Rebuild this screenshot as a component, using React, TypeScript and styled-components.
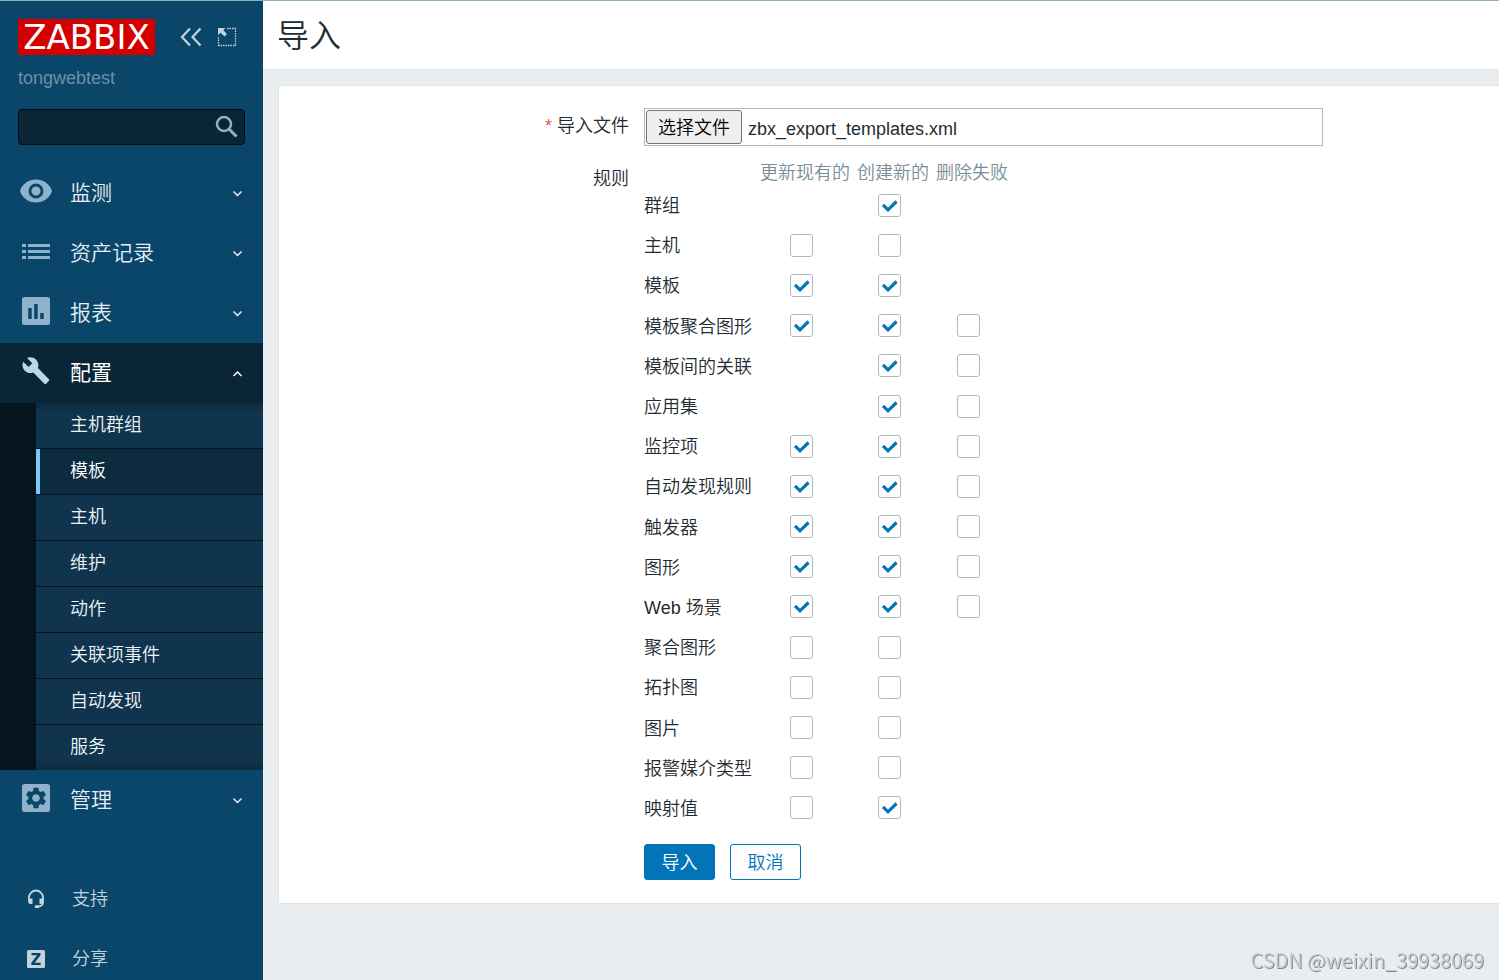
import React, { useRef, useState } from "react";
import styled, { createGlobalStyle } from "styled-components";

const GlobalStyle = createGlobalStyle`
  *, *::before, *::after { box-sizing: border-box; }
  body {
    margin: 0;
    background: #e9edf0;
    color: #1f2c33;
    font-family: "Liberation Sans", "Noto Sans CJK SC", sans-serif;
    font-size: 18px;
    font-weight: 350;
    line-height: 24px;
  }
  button, input { font: inherit; }
`;

const Page = styled.div`
  display: flex;
  height: 100vh;
  border-top: 1px solid #8fb0b5;
`;

const Sidebar = styled.aside`
  flex: none;
  width: 263px;
  display: flex;
  flex-direction: column;
  background: #0a466a;
  overflow-y: auto;
  scrollbar-width: none;
`;

const Brand = styled.div`
  display: flex;
  flex: none;
  align-items: center;
  padding: 18px 18px 0;
`;

const Logo = styled.a`
  width: 137px;
  height: 36px;
  margin-right: 25px;
  background: #d40000;
  color: #fff;
  font-family: "DejaVu Sans", sans-serif;
  font-size: 34px;
  font-weight: 400;
  line-height: 37px;
  text-align: center;
  text-decoration: none;
`;

const IconButton = styled.button`
  display: flex;
  padding: 0;
  border: 0;
  background: none;
  color: #c3d3dd;
  cursor: pointer;
  & + & { margin-left: 15px; }
`;

const ServerName = styled.div`
  flex: none;
  padding: 11px 18px 0;
  color: #6c90a8;
`;

const SearchForm = styled.form`
  display: flex;
  flex: none;
  align-items: center;
  height: 36px;
  margin: 19px 18px 18px;
  padding-right: 6px;
  background: #0a2535;
  border: 1px solid #020c12;
  border-radius: 4px;
`;

const SearchInput = styled.input`
  flex: 1;
  min-width: 0;
  padding: 0 10px;
  border: 0;
  outline: 0;
  background: transparent;
  color: #fff;
`;

const SearchButton = styled(IconButton)`
  color: #8fb0c6;
`;

const List = styled.ul`
  margin: 0;
  padding: 0;
  list-style: none;
`;

const MenuLink = styled.a<{ $open?: boolean }>`
  display: flex;
  align-items: center;
  height: 60px;
  padding: 0 20px;
  background: ${(p) => (p.$open ? "#0a2535" : "transparent")};
  color: ${(p) => (p.$open ? "#ffffff" : "#e6eef3")};
  font-size: 21px;
  font-weight: ${(p) => (p.$open ? 400 : 350)};
  text-decoration: none;
`;

const MenuIcon = styled.span<{ $open?: boolean }>`
  display: flex;
  width: 32px;
  margin-right: 18px;
  padding-bottom: 4px;
  color: ${(p) => (p.$open ? "#b9d7ec" : "#8fb3cc")};
`;

const MenuText = styled.span`
  flex: 1;
`;

const Submenu = styled(List)`
  padding-left: 36px;
  background: #04151e;
`;

const SubItem = styled.li`
  & + & { border-top: 1px solid #04151e; }
`;

const SubLink = styled.a<{ $active?: boolean }>`
  display: block;
  height: 45px;
  padding-left: 30px;
  border-left: 4px solid ${(p) => (p.$active ? "#78c7ff" : "transparent")};
  background: ${(p) => (p.$active ? "#0c2b3f" : "#10344e")};
  color: ${(p) => (p.$active ? "#ffffff" : "#eef3f6")};
  line-height: 45px;
  text-decoration: none;
  ${SubItem}:first-child & { background: linear-gradient(#0c2b3f, #10344e 10px) border-box; }
  ${SubItem}:last-child & { background: linear-gradient(#10344e 35px, #0c2b3f) border-box; }
`;

const FooterList = styled(List)`
  margin-top: 39px;
`;

const FooterLink = styled.a`
  display: flex;
  align-items: center;
  gap: 26px;
  height: 60px;
  padding-left: 26px;
  color: #c3d3dd;
  text-decoration: none;
`;

const Main = styled.main`
  flex: 1;
  min-width: 0;
  overflow: hidden;
`;

const Header = styled.header`
  height: 69px;
  padding: 0 14px;
  background: #fff;
  border-bottom: 1px solid #dfe4e7;
`;

const Title = styled.h1`
  margin: 0;
  font-size: 32px;
  font-weight: 350;
  line-height: 71px;
`;

const Panel = styled.form`
  display: grid;
  grid-template-columns: minmax(150px, 350px) minmax(0, 679px);
  column-gap: 15px;
  margin: 15px 0 0 15px;
  padding: 22px 0 23px;
  background: #fff;
  border: 1px solid #dfe4e7;
  border-right: 0;
`;

const FieldLabel = styled.label`
  padding-top: 6px;
  text-align: right;
`;

const RulesLabel = styled.div`
  padding-top: 21px;
  text-align: right;
`;

const Required = styled.span`
  margin-right: 5px;
  color: #e45959;
`;

const FileField = styled.div`
  display: flex;
  align-items: center;
  gap: 6px;
  height: 38px;
  padding: 1px;
  border: 1px solid #acbbc2;
`;

const FileInput = styled.input`
  display: none;
`;

const FileButton = styled.button`
  height: 34px;
  padding: 2px 11px 0;
  background: #efefef;
  border: 1px solid #767676;
  border-radius: 3px;
  color: #000;
`;

const FileName = styled.span`
  padding-top: 4px;
`;

const Rules = styled.div`
  padding-top: 15px;
`;

const RuleTable = styled.table`
  border-collapse: collapse;
  height: 667px;
`;

const ColumnHead = styled.th`
  height: 24px;
  padding: 0 0 0 7px;
  color: #768d99;
  font-weight: 350;
`;

const RuleName = styled.th`
  padding: 2px 1px 0 0;
  font-weight: 350;
  text-align: left;
`;

const RuleCell = styled.td`
  padding: 0;
  text-align: center;
`;

const CheckBox = styled.input`
  appearance: none;
  display: block;
  width: 23px;
  height: 23px;
  margin: 0 auto;
  background: #fff;
  border: 1px solid #acbbc2;
  border-radius: 3px;
  &:checked {
    background-image: url("data:image/svg+xml,%3Csvg xmlns='http://www.w3.org/2000/svg' viewBox='0 0 21 21'%3E%3Cpath d='M4 9.800l5 5L17.500 6.500' fill='none' stroke='%230275b8' stroke-width='3.200'/%3E%3C/svg%3E");
  }
`;

const Actions = styled.div`
  grid-column: 2;
  display: flex;
  gap: 15px;
  padding-top: 16px;
`;

const ActionButton = styled.button<{ $outline?: boolean }>`
  width: 71px;
  height: 36px;
  padding: 2px 0 0;
  background: ${(p) => (p.$outline ? "#fff" : "#0275b8")};
  border: 1px solid #0275b8;
  border-radius: 3px;
  color: ${(p) => (p.$outline ? "#0275b8" : "#fff")};
`;

const Watermark = styled.div`
  position: fixed;
  right: 15px;
  bottom: 7px;
  color: #c9cccf;
  font-family: "Noto Sans CJK SC", sans-serif;
  font-size: 20px;
  line-height: 26px;
  text-shadow: 1px 1px 0 #85888b;
`;

const EyeIcon = () => (
  <svg width="32" height="24" viewBox="0 0 32 24" fill="currentColor">
    <path
      fillRule="evenodd"
      d="M16 .5C8.500 .5 2.200 5.200 0 12c2.200 6.800 8.500 11.500 16 11.500S29.800 18.800 32 12C29.800 5.200 23.500 .5 16 .5zm0 19a7.500 7.500 0 1 1 0-15 7.500 7.500 0 0 1 0 15zm0-12a4.500 4.500 0 1 0 0 9 4.500 4.500 0 0 0 0-9z"
    />
  </svg>
);

const ListIcon = () => (
  <svg width="32" height="18" viewBox="0 0 32 18" fill="currentColor">
    <path d="M2 2h4v3H2zM8 2h22v3H8zM2 8h4v3H2zM8 8h22v3H8zM2 14h4v3H2zM8 14h22v3H8z" />
  </svg>
);

const ChartIcon = () => (
  <svg width="32" height="28" viewBox="0 0 32 28" fill="currentColor">
    <path
      fillRule="evenodd"
      d="M4.500 0h23A2.500 2.500 0 0 1 30 2.500v23a2.500 2.500 0 0 1-2.500 2.500h-23A2.500 2.500 0 0 1 2 25.500v-23A2.500 2.500 0 0 1 4.500 0zM8.200 11v11h3.500V11zm6-4v15h3.500V7zm6 9v6h3.500v-6z"
    />
  </svg>
);

const WrenchIcon = () => (
  <svg width="32" height="28" viewBox="0 0 32 28" fill="currentColor">
    <path
      transform="translate(1.300 -1) scale(1.220)"
      d="M22.700 19l-9.100-9.100c.9-2.300.4-5-1.500-6.900-2-2-5-2.400-7.400-1.300L9 6 6 9 1.600 4.700C.4 7.100.9 10.100 2.900 12.100c1.900 1.900 4.600 2.400 6.900 1.500l9.100 9.100c.4.4 1 .4 1.400 0l2.300-2.300c.5-.4.5-1.100.1-1.400z"
    />
  </svg>
);

const GearIcon = () => (
  <svg width="32" height="28" viewBox="0 0 32 28">
    <rect x="2" width="28" height="28" rx="2.500" fill="currentColor" />
    <path
      transform="translate(3.300 1.300) scale(1.060)"
      fill="#0a466a"
      d="M19.140 12.940c.04-.3.06-.61.06-.94 0-.32-.02-.64-.07-.94l2.030-1.580c.18-.14.23-.41.12-.61l-1.920-3.320c-.12-.22-.37-.29-.59-.22l-2.390.96c-.5-.38-1.030-.7-1.620-.94L14.400 2.810c-.04-.24-.24-.41-.48-.41h-3.840c-.24 0-.43.17-.47.41L9.250 5.350c-.59.24-1.130.57-1.620.94l-2.390-.96c-.22-.08-.47 0-.59.22L2.740 8.870c-.12.21-.08.47.12.61l2.030 1.580c-.05.3-.09.63-.09.94s.02.64.07.94l-2.030 1.580c-.18.14-.23.41-.12.61l1.920 3.320c.12.22.37.29.59.22l2.390-.96c.5.38 1.030.7 1.620.94l.36 2.540c.05.24.24.41.48.41h3.840c.24 0 .44-.17.47-.41l.36-2.540c.59-.24 1.130-.56 1.620-.94l2.390.96c.22.08.47 0 .59-.22l1.920-3.320c.12-.22.07-.47-.12-.61l-2.010-1.580zM12 15.600c-1.980 0-3.600-1.620-3.600-3.600s1.620-3.600 3.600-3.600 3.600 1.620 3.600 3.600-1.620 3.600-3.600 3.600z"
    />
  </svg>
);

const Chevron = ({ up }: { up?: boolean }) => (
  <svg width="12" height="12" viewBox="0 0 12 12" fill="none" stroke="currentColor" strokeWidth="1.500">
    <path d={up ? "M2.500 9L6.500 5l4 4" : "M2.500 4.500l4 4 4-4"} />
  </svg>
);

const CollapseIcon = () => (
  <svg width="22" height="20" viewBox="0 0 22 20" fill="none" stroke="currentColor" strokeWidth="2.200">
    <path d="M10 1.500L2 10l8 8.500M20.500 1.500l-8 8.500 8 8.500" />
  </svg>
);

const KioskIcon = () => (
  <svg width="20" height="20" viewBox="0 0 20 20" fill="none" stroke="currentColor">
    <path d="M10 1.500H19M18.500 1v18M1.500 10v9M1 18.500h18" strokeDasharray="1.500 1" strokeWidth="1.300" />
    <path d="M1 1h7.500L6.300 3.200 10 7 7.500 9.500 3.600 5.800 1 8.300z" fill="currentColor" stroke="none" />
  </svg>
);

const SearchIcon = () => (
  <svg width="24" height="24" viewBox="0 0 24 24" fill="none" stroke="currentColor">
    <circle cx="10" cy="9" r="7" strokeWidth="2.500" />
    <path d="M15 14l7.500 7.500" strokeWidth="3" />
  </svg>
);

const HeadsetIcon = () => (
  <svg width="20" height="20" viewBox="0 0 20 20">
    <path
      d="M3 12V8.500a7 7 0 0 1 14 0V13c0 3-2 4.500-5 4.500"
      fill="none"
      stroke="currentColor"
      strokeWidth="1.800"
    />
    <path
      d="M2.200 9.500H6.500v5.500H4.500a2.300 2.300 0 0 1-2.300-2.300zM13.500 9.500h4.300v3.200a2.300 2.300 0 0 1-2.300 2.300h-2zM10 16.300h3v2.700h-3a1.300 1.300 0 0 1 0-2.700z"
      fill="currentColor"
    />
  </svg>
);

const ShareIcon = () => (
  <svg width="20" height="20" viewBox="0 0 20 20">
    <rect x="1" y="1" width="18" height="18" rx="1.500" fill="currentColor" />
    <path d="M5.500 4h9v2.200L8.700 13.700h6V16H5.300v-2.200l5.800-7.500H5.500z" fill="#0a466a" />
  </svg>
);

const topMenu = [
  { text: "监测", Icon: EyeIcon },
  { text: "资产记录", Icon: ListIcon },
  { text: "报表", Icon: ChartIcon },
];

const configItems = ["主机群组", "模板", "主机", "维护", "动作", "关联项事件", "自动发现", "服务"];

const ruleColumns = ["更新现有的", "创建新的", "删除失败"];

/* One flag per column: true is ticked, false is clear, null has no box. */
const rules: { name: string; flags: (boolean | null)[] }[] = [
  { name: "群组", flags: [null, true, null] },
  { name: "主机", flags: [false, false, null] },
  { name: "模板", flags: [true, true, null] },
  { name: "模板聚合图形", flags: [true, true, false] },
  { name: "模板间的关联", flags: [null, true, false] },
  { name: "应用集", flags: [null, true, false] },
  { name: "监控项", flags: [true, true, false] },
  { name: "自动发现规则", flags: [true, true, false] },
  { name: "触发器", flags: [true, true, false] },
  { name: "图形", flags: [true, true, false] },
  { name: "Web 场景", flags: [true, true, false] },
  { name: "聚合图形", flags: [false, false, null] },
  { name: "拓扑图", flags: [false, false, null] },
  { name: "图片", flags: [false, false, null] },
  { name: "报警媒介类型", flags: [false, false, null] },
  { name: "映射值", flags: [false, true, null] },
];

function MenuEntry({ text, Icon, open }: { text: string; Icon: React.ComponentType; open?: boolean }) {
  return (
    <MenuLink href="#" $open={open}>
      <MenuIcon $open={open}>
        <Icon />
      </MenuIcon>
      <MenuText>{text}</MenuText>
      <Chevron up={open} />
    </MenuLink>
  );
}

export default function App() {
  const fileRef = useRef<HTMLInputElement>(null);
  const [fileName, setFileName] = useState("zbx_export_templates.xml");

  return (
    <>
      <GlobalStyle />
      <Page>
        <Sidebar>
          <Brand>
            <Logo href="#">ZABBIX</Logo>
            <IconButton type="button" aria-label="Collapse">
              <CollapseIcon />
            </IconButton>
            <IconButton type="button" aria-label="Kiosk">
              <KioskIcon />
            </IconButton>
          </Brand>
          <ServerName>tongwebtest</ServerName>
          <SearchForm role="search">
            <SearchInput type="text" aria-label="Search" />
            <SearchButton type="button" aria-label="Search">
              <SearchIcon />
            </SearchButton>
          </SearchForm>
          <nav>
            <List>
              {topMenu.map((m) => (
                <li key={m.text}>
                  <MenuEntry {...m} />
                </li>
              ))}
              <li>
                <MenuEntry text="配置" Icon={WrenchIcon} open />
                <Submenu>
                  {configItems.map((item) => (
                    <SubItem key={item}>
                      <SubLink href="#" $active={item === "模板"}>
                        {item}
                      </SubLink>
                    </SubItem>
                  ))}
                </Submenu>
              </li>
              <li>
                <MenuEntry text="管理" Icon={GearIcon} />
              </li>
            </List>
            <FooterList>
              <li>
                <FooterLink href="#">
                  <HeadsetIcon />
                  支持
                </FooterLink>
              </li>
              <li>
                <FooterLink href="#">
                  <ShareIcon />
                  分享
                </FooterLink>
              </li>
            </FooterList>
          </nav>
        </Sidebar>
        <Main>
          <Header>
            <Title>导入</Title>
          </Header>
          <Panel onSubmit={(e) => e.preventDefault()}>
            <FieldLabel htmlFor="import-file">
              <Required>*</Required>
              导入文件
            </FieldLabel>
            <FileField>
              <FileInput
                id="import-file"
                type="file"
                ref={fileRef}
                onChange={(e) => setFileName(e.target.files?.[0]?.name ?? "")}
              />
              <FileButton type="button" onClick={() => fileRef.current?.click()}>
                选择文件
              </FileButton>
              <FileName>{fileName}</FileName>
            </FileField>
            <RulesLabel id="rules-label">规则</RulesLabel>
            <Rules>
              <RuleTable aria-labelledby="rules-label">
                <thead>
                  <tr>
                    <td />
                    {ruleColumns.map((c) => (
                      <ColumnHead key={c} scope="col">
                        {c}
                      </ColumnHead>
                    ))}
                  </tr>
                </thead>
                <tbody>
                  {rules.map((r) => (
                    <tr key={r.name}>
                      <RuleName scope="row">{r.name}</RuleName>
                      {r.flags.map((flag, i) => (
                        <RuleCell key={i}>
                          {flag !== null && (
                            <CheckBox
                              type="checkbox"
                              defaultChecked={flag}
                              aria-label={`${r.name} ${ruleColumns[i]}`}
                            />
                          )}
                        </RuleCell>
                      ))}
                    </tr>
                  ))}
                </tbody>
              </RuleTable>
            </Rules>
            <Actions>
              <ActionButton type="submit">导入</ActionButton>
              <ActionButton type="button" $outline>
                取消
              </ActionButton>
            </Actions>
          </Panel>
        </Main>
      </Page>
      <Watermark>CSDN @weixin_39938069</Watermark>
    </>
  );
}
